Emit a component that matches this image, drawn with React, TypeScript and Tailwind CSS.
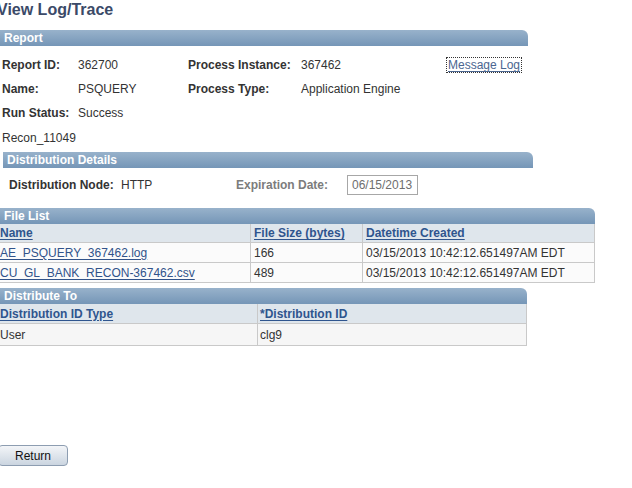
import type { ReactNode } from "react";

// PeopleSoft "View Log/Trace" page, classic grey/blue theme.

function Bar({ title, className = "" }: { title: string; className?: string }) {
  return (
    <div
      className={`flex h-[16px] items-center rounded-tr-[6px] bg-gradient-to-b from-[#98b2cb] to-[#7596b7] pl-[4px] text-[12px] font-bold leading-none text-white ${className}`}
    >
      {title}
    </div>
  );
}

function Label({ children, muted = false }: { children: ReactNode; muted?: boolean }) {
  return (
    <span className={`font-bold ${muted ? "text-[#7c7c7c]" : "text-[#333]"}`}>{children}</span>
  );
}

const headLink = "font-bold text-[#2f558e] underline underline-offset-[2px]";
const dataLink = "text-[#31538a] underline underline-offset-[2px]";

const files = [
  { name: "AE_PSQUERY_367462.log", size: "166", created: "03/15/2013 10:42:12.651497AM EDT" },
  { name: "CU_GL_BANK_RECON-367462.csv", size: "489", created: "03/15/2013 10:42:12.651497AM EDT" },
];

export default function App() {
  return (
    <div className="relative h-[488px] w-[632px] overflow-hidden bg-white font-['Liberation_Sans',Arial,sans-serif] text-[12px] text-[#333]">
      <h1 className="-ml-[3px] h-[20px] text-[16px] font-bold leading-[20px] text-[#3b4a68]">
        View Log/Trace
      </h1>

      <Bar title="Report" className="mt-[10px] w-[528px]" />

      <div className="mt-[7px] w-[528px]">
        <div className="flex h-[24px] items-center">
          <div className="w-[78px] pl-[2px]"><Label>Report ID:</Label></div>
          <div className="w-[110px]">362700</div>
          <div className="w-[113px]"><Label>Process Instance:</Label></div>
          <div className="w-[145px]">367462</div>
          <a className="border border-dotted border-[#333] px-[1px] leading-[14px] text-[#4b6690] underline underline-offset-[2px]">
            Message Log
          </a>
        </div>
        <div className="flex h-[24px] items-center">
          <div className="w-[78px] pl-[2px]"><Label>Name:</Label></div>
          <div className="w-[110px]">PSQUERY</div>
          <div className="w-[113px]"><Label>Process Type:</Label></div>
          <div>Application Engine</div>
        </div>
        <div className="flex h-[24px] items-center">
          <div className="w-[78px] pl-[2px]"><Label>Run Status:</Label></div>
          <div>Success</div>
        </div>
        <div className="flex h-[26px] items-center pl-[2px]">Recon_11049</div>
      </div>

      <Bar title="Distribution Details" className="mt-[1px] ml-[3px] w-[530px]" />

      <div className="mt-[6px] flex h-[22px] items-center">
        <div className="w-[121px] pl-[9px]"><Label>Distribution Node:</Label></div>
        <div className="w-[115px]">HTTP</div>
        <div className="w-[111px]"><Label muted>Expiration Date:</Label></div>
        <div className="flex h-[20px] w-[71px] items-center border border-[#a7a7a7] pl-[4px] text-[#6e6e6e]">
          06/15/2013
        </div>
      </div>

      <Bar title="File List" className="mt-[12px] w-[595px]" />
      <div className="w-[595px] border-r border-b border-[#c9c9c9]">
        <div className="grid h-[18px] grid-cols-[251px_112px_1fr] bg-[#dfe6ec]">
          <div className="flex items-center border-r border-[#c9c9c9]"><a className={headLink}>Name</a></div>
          <div className="flex items-center border-r border-[#c9c9c9] pl-[3px]"><a className={headLink}>File Size (bytes)</a></div>
          <div className="flex items-center pl-[3px]"><a className={headLink}>Datetime Created</a></div>
        </div>
        {files.map((f) => (
          <div key={f.name} className="grid h-[20px] grid-cols-[251px_112px_1fr] border-t border-[#c9c9c9] bg-[#fbfbfb]">
            <div className="flex items-center border-r border-[#c9c9c9]"><a className={dataLink}>{f.name}</a></div>
            <div className="flex items-center border-r border-[#c9c9c9] pl-[3px]">{f.size}</div>
            <div className="flex items-center pl-[3px]">{f.created}</div>
          </div>
        ))}
      </div>

      <Bar title="Distribute To" className="mt-[5px] h-[15px] w-[527px]" />
      <div className="w-[527px] border-r border-b border-[#c9c9c9]">
        <div className="grid h-[19px] grid-cols-[258px_1fr] bg-[#dfe6ec]">
          <div className="flex items-center border-r border-[#c9c9c9]"><a className={headLink}>Distribution ID Type</a></div>
          <div className="flex items-center pl-[2px]"><a className={headLink}>*Distribution ID</a></div>
        </div>
        <div className="grid h-[22px] grid-cols-[258px_1fr] border-t border-[#c9c9c9] bg-[#f6f6f6]">
          <div className="flex items-center border-r border-[#c9c9c9]">User</div>
          <div className="flex items-center pl-[2px]">clg9</div>
        </div>
      </div>

      <button
        type="button"
        className="mt-[99px] -ml-[2px] flex h-[21px] w-[70px] items-center justify-center rounded-[4px] border border-[#8d9db1] bg-gradient-to-b from-[#f3f5f8] to-[#cbd5e0] text-[12px] text-[#111]"
      >
        Return
      </button>
    </div>
  );
}
